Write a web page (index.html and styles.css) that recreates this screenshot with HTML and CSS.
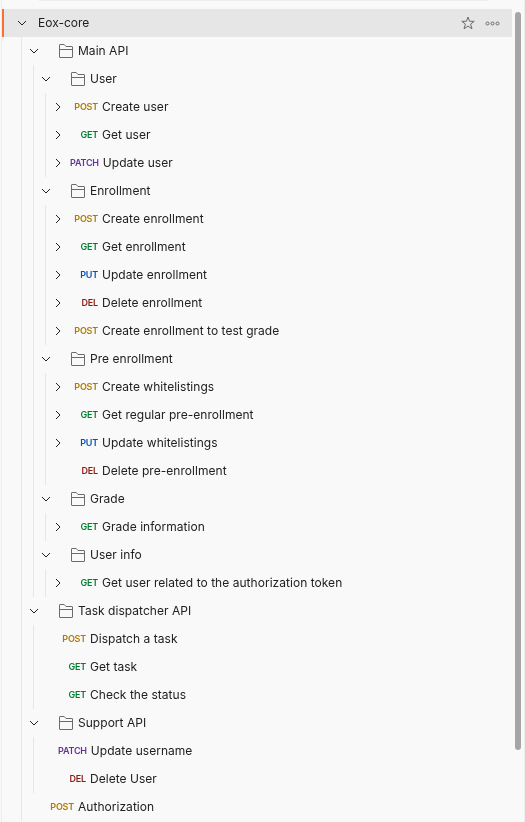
FILE: index.html
```
<!DOCTYPE html>
<html lang="en">
<head>
<meta charset="utf-8">
<title>Eox-core</title>
<link rel="stylesheet" href="styles.css">
</head>
<body>
<svg class="defs" aria-hidden="true">
  <symbol id="down" viewBox="0 0 16 16"><path d="M4 6l4 4 4-4" /></symbol>
  <symbol id="right" viewBox="0 0 16 16"><path d="M6 4l4 4-4 4" /></symbol>
  <symbol id="folder" viewBox="0 0 14 14"><path d="M.5 13V1q0-.5.5-.5h4.2l1.8 2h6q.5 0 .5.5v10q0 .5-.5.5H1q-.5 0-.5-.5zM.5 5.5h13" /></symbol>
</svg>
<aside class="sidebar">
  <main class="panel">
    <div class="search-edge"></div>
    <header class="row collection">
      <svg class="chevron"><use href="#down"/></svg>
      <span class="title">Eox-core</span>
      <svg class="star" viewBox="0 0 14 14"><path d="M7 1l1.6 4.3h4.6L9.6 8.1l1.4 4.7L7 10.1l-4 2.7 1.4-4.7L.8 5.3h4.6z"/></svg>
      <svg class="dots" viewBox="0 0 15 5"><circle cx="2.5" cy="2.5" r="1.5"/><circle cx="7.5" cy="2.5" r="1.5"/><circle cx="12.5" cy="2.5" r="1.5"/></svg>
    </header>
    <ul id="tree" class="branch"></ul>
  </main>
  <div class="scrollbar"></div>
</aside>
<script src="tree.js"></script>
</body>
</html>
```
FILE: styles.css
```
* { box-sizing: border-box; }
body { margin: 0; background: #f9f9f9; color: #212121; font: 12px/28px Inter, sans-serif; letter-spacing: .035px; overflow: hidden; }
.defs { display: none; }
.sidebar { display: flex; height: 822px; padding-left: 1px; overflow: hidden; will-change: transform; }
.panel { width: 511px; border-left: 1px solid #ededed; flex: none; }
.search-edge { height: 1px; margin: 0 24px 8px 37px; background: #ededed; }
.row { display: flex; align-items: center; height: 28px; white-space: nowrap; }
.row svg { flex: none; fill: none; stroke: #6b6b6b; }
.collection { background: #e6e6e6; box-shadow: inset 2px 0 #ff6c37; padding: 0 12px 0 12px; }
.row .chevron { width: 16px; height: 16px; stroke: #212121; stroke-width: 1; }
.title { flex: 1; margin-left: 8px; letter-spacing: 0; }
.star { width: 14px; height: 14px; margin-right: 10px; }
.dots { width: 15px; height: 5px; }
.branch { list-style: none; margin: 0 0 0 11px; padding: 0; border-left: 1px solid #e6e6e6; }
.panel > .branch { margin-left: 19px; height: 784px; }
.item { padding-left: 4px; }
.folder { width: 14px; height: 14px; margin: 0 5px 0 17px; }
.slot { width: 16px; flex: none; }
.method { min-width: 28px; margin: 0 4px; text-align: right; font-size: 9px; font-weight: 600; letter-spacing: -.2px; }
.post { color: #ad7a03; }
.get { color: #007f31; }
.patch { color: #623497; }
.put { color: #0053b8; }
.del { color: #8e1a10; }
.scrollbar { width: 6px; height: 738px; margin: 12px 0 0 3px; border-radius: 3px; background: #a6a6a6; }
.sidebar::after { content: ""; width: 1px; height: 822px; margin-left: auto; background: #ededed; }
```
FILE: tree.js
```
const data = [
  { name: 'Main API', items: [
    { name: 'User', items: [
      ['POST', 'Create user', 1], ['GET', 'Get user', 1], ['PATCH', 'Update user', 1]] },
    { name: 'Enrollment', items: [
      ['POST', 'Create enrollment', 1], ['GET', 'Get enrollment', 1], ['PUT', 'Update enrollment', 1],
      ['DEL', 'Delete enrollment', 1], ['POST', 'Create enrollment to test grade', 1]] },
    { name: 'Pre enrollment', items: [
      ['POST', 'Create whitelistings', 1], ['GET', 'Get regular pre-enrollment', 1],
      ['PUT', 'Update whitelistings', 1], ['DEL', 'Delete pre-enrollment']] },
    { name: 'Grade', items: [['GET', 'Grade information', 1]] },
    { name: 'User info', items: [['GET', 'Get user related to the authorization token', 1]] }] },
  { name: 'Task dispatcher API', items: [
    ['POST', 'Dispatch a task'], ['GET', 'Get task'], ['GET', 'Check the status']] },
  { name: 'Support API', items: [['PATCH', 'Update username'], ['DEL', 'Delete User']] },
  ['POST', 'Authorization']
];

const chevron = dir => `<svg class="chevron"><use href="#${dir}"/></svg>`;

function render(node) {
  if (Array.isArray(node)) {
    const [method, name, open] = node;
    return `<li><div class="row item">${open ? chevron('right') : '<span class="slot"></span>'}` +
      `<span class="method ${method.toLowerCase()}">${method}</span><span>${name}</span></div></li>`;
  }
  return `<li><div class="row item">${chevron('down')}<svg class="folder"><use href="#folder"/></svg>` +
    `<span>${node.name}</span></div><ul class="branch">${node.items.map(render).join('')}</ul></li>`;
}

document.getElementById('tree').innerHTML = data.map(render).join('');
```
